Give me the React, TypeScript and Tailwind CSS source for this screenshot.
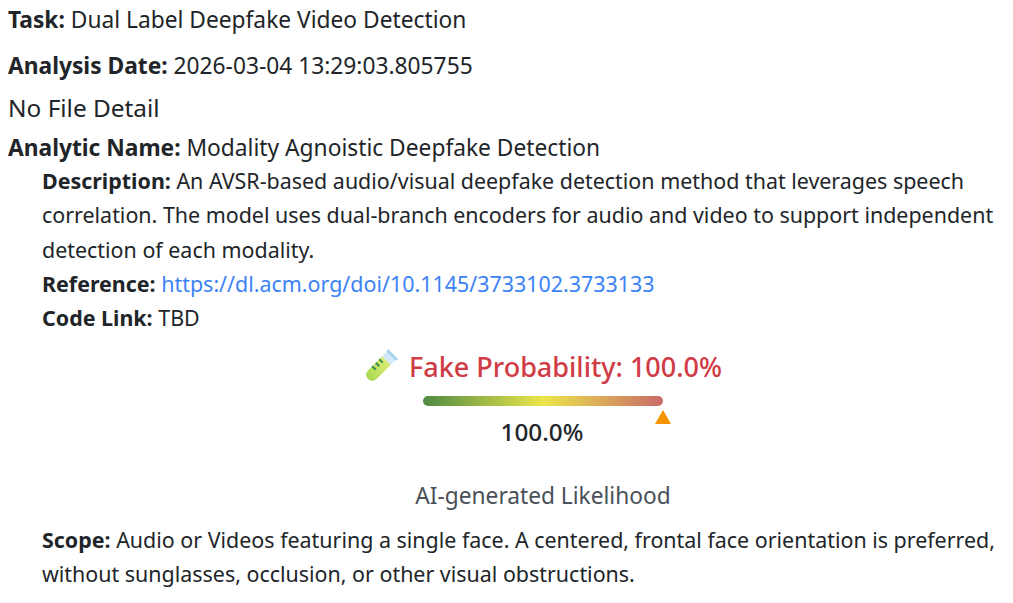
function TestTube() {
  return (
    <svg width="32" height="32" viewBox="0 0 32 32" className="shrink-0 overflow-visible">
      <defs>
        <linearGradient id="liquid" x1="0" y1="0" x2="0" y2="1">
          <stop offset="0" stopColor="#dcec72" />
          <stop offset="1" stopColor="#a6d94e" />
        </linearGradient>
      </defs>
      <g transform="rotate(45 16 16)">
        <path d="M10 -1 H22 V27 a6 6 0 0 1 -12 0 Z" fill="#d4e8f7" />
        <path d="M10 7 H22 V27 a6 6 0 0 1 -12 0 Z" fill="url(#liquid)" />
        <rect x="9" y="-2.5" width="14" height="3" rx="1" fill="#a9d3f2" />
        <rect x="10" y="10" width="5" height="2" fill="#3f8f52" />
        <rect x="10" y="15" width="5" height="2" fill="#3f8f52" />
        <rect x="10" y="20" width="5" height="2" fill="#3f8f52" />
      </g>
    </svg>
  );
}

export default function App() {
  return (
    <div className="min-h-screen bg-white pl-2 pt-[3px] text-[#212529] text-[21.43px] leading-[34.25px] font-['Noto_Sans',sans-serif]">
      <p className="mb-[12px] text-[22.75px]"><b>Task:</b> Dual Label Deepfake Video Detection</p>
      <p className="mb-[7px] text-[22.75px]"><b>Analysis Date:</b> 2026-03-04 13:29:03.805755</p>
      <p className="text-[24.4px] mb-[6px]">No File Detail</p>
      <p className="text-[22.75px] leading-[33.25px]"><b>Analytic Name:</b> Modality Agnoistic Deepfake Detection</p>
      <div className="pl-[34px] pr-2">
        <p><b>Description:</b> An AVSR-based audio/visual deepfake detection method that leverages speech correlation. The model uses dual-branch encoders for audio and video to support independent detection of each modality.</p>
        <p><b>Reference:</b> <a href="#" className="text-[#3b82f6]">https://dl.acm.org/doi/10.1145/3733102.3733133</a></p>
        <p><b>Code Link:</b> TBD</p>
        <div className="flex flex-col items-center pl-[39px] mt-[12px]">
          <div className="flex items-center gap-[13px] text-[27px] font-medium text-[#d13b45] leading-[40px]">
            <TestTube />
            <span>Fake Probability: 100.0%</span>
          </div>
          <div className="relative w-[240px] h-[10px] mt-[9px] rounded-full bg-[linear-gradient(to_right,#4f8a44,#ebe64a,#c96a6a)]">
            <div className="absolute left-[232px] top-[14px] w-0 h-0 border-l-[8px] border-r-[8px] border-b-[14px] border-l-transparent border-r-transparent border-b-[#f59300]" />
          </div>
          <div className="text-[24.3px] font-medium mt-[8px] mr-[2px] leading-[36px]">100.0%</div>
          <div className="text-[#495057] text-[22.7px] mt-[29px]">AI-generated Likelihood</div>
        </div>
        <p className="mt-[9px]"><b>Scope:</b> Audio or Videos featuring a single face. A centered, frontal face orientation is preferred, without sunglasses, occlusion, or other visual obstructions.</p>
      </div>
    </div>
  );
}
